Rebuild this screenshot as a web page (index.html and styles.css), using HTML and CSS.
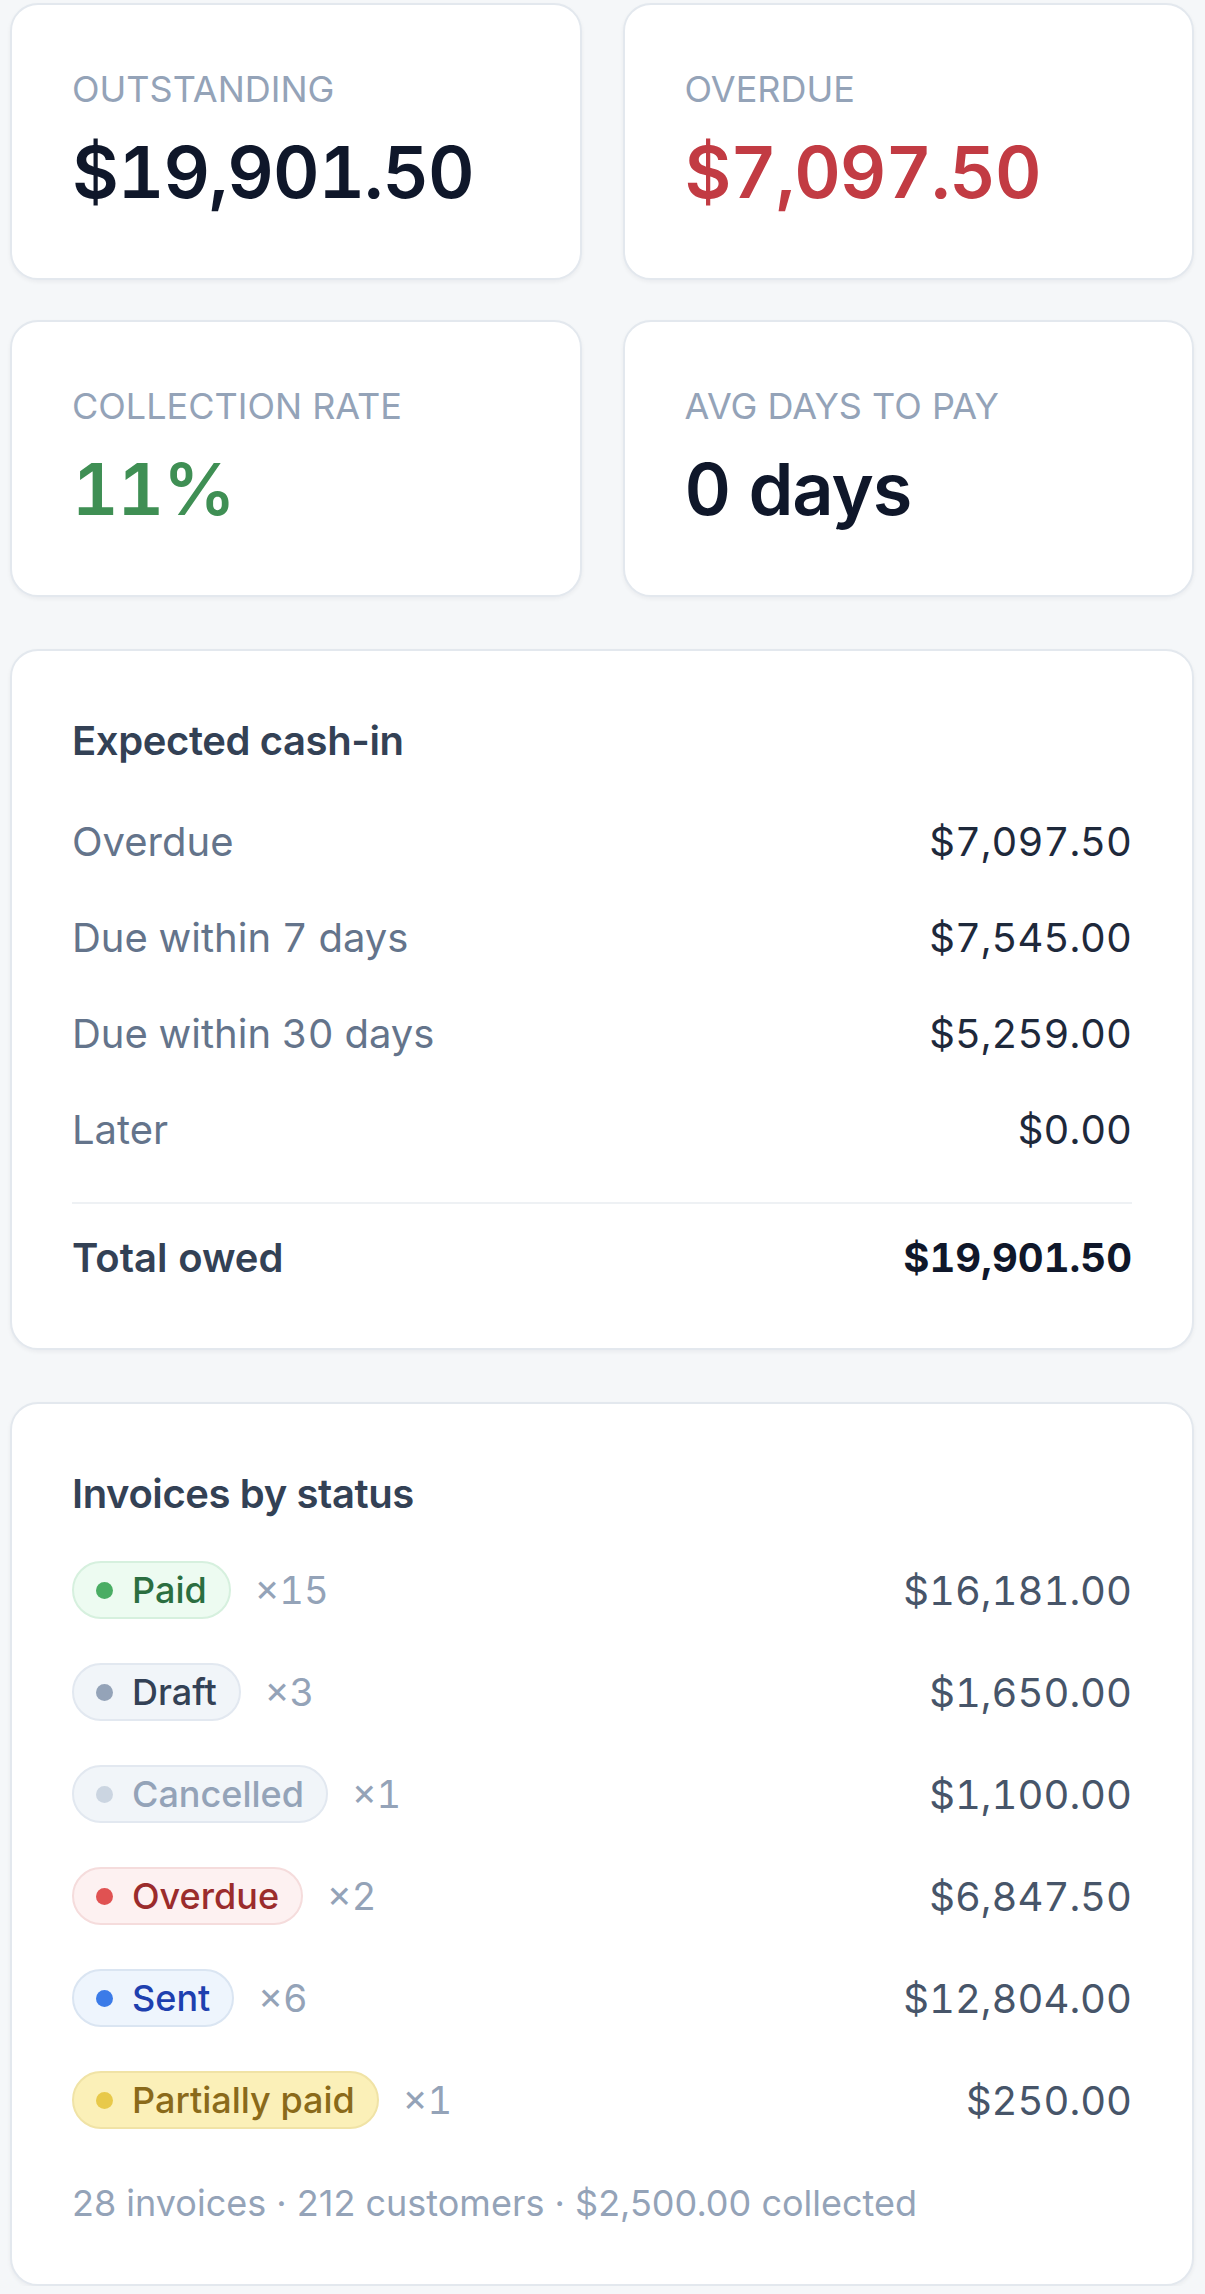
FILE: index.html
```html
<!DOCTYPE html>
<html lang="en">

<head>
    <meta charset="UTF-8">
    <meta name="viewport" content="width=device-width, initial-scale=1.0">
    <title>Receivables</title>
    <link rel="stylesheet" href="styles.css">
</head>

<body>
    <div class="page">
        <div class="stats">
            <div class="card stat">
                <div class="stat-label">Outstanding</div>
                <div class="stat-value">$19,901.50</div>
            </div>
            <div class="card stat">
                <div class="stat-label">Overdue</div>
                <div class="stat-value red">$7,097.50</div>
            </div>
            <div class="card stat">
                <div class="stat-label">Collection rate</div>
                <div class="stat-value green">11%</div>
            </div>
            <div class="card stat">
                <div class="stat-label">Avg days to pay</div>
                <div class="stat-value">0 days</div>
            </div>
        </div>

        <div class="card panel cashin">
            <h2>Expected cash-in</h2>
            <div class="row">
                <span class="row-label">Overdue</span>
                <span class="row-amount">$7,097.50</span>
            </div>
            <div class="row">
                <span class="row-label">Due within 7 days</span>
                <span class="row-amount">$7,545.00</span>
            </div>
            <div class="row">
                <span class="row-label">Due within 30 days</span>
                <span class="row-amount">$5,259.00</span>
            </div>
            <div class="row">
                <span class="row-label">Later</span>
                <span class="row-amount">$0.00</span>
            </div>
            <div class="row total">
                <span class="row-label">Total owed</span>
                <span class="row-amount">$19,901.50</span>
            </div>
        </div>

        <div class="card panel statuses">
            <h2>Invoices by status</h2>
            <div class="status-row">
                <span class="badge paid"><i class="dot"></i>Paid</span>
                <span class="count">×15</span>
                <span class="status-amount">$16,181.00</span>
            </div>
            <div class="status-row">
                <span class="badge draft"><i class="dot"></i>Draft</span>
                <span class="count">×3</span>
                <span class="status-amount">$1,650.00</span>
            </div>
            <div class="status-row">
                <span class="badge cancelled"><i class="dot"></i>Cancelled</span>
                <span class="count">×1</span>
                <span class="status-amount">$1,100.00</span>
            </div>
            <div class="status-row">
                <span class="badge overdue"><i class="dot"></i>Overdue</span>
                <span class="count">×2</span>
                <span class="status-amount">$6,847.50</span>
            </div>
            <div class="status-row">
                <span class="badge sent"><i class="dot"></i>Sent</span>
                <span class="count">×6</span>
                <span class="status-amount">$12,804.00</span>
            </div>
            <div class="status-row">
                <span class="badge partial"><i class="dot"></i>Partially paid</span>
                <span class="count">×1</span>
                <span class="status-amount">$250.00</span>
            </div>
            <p class="summary">28 invoices · 212 customers · $2,500.00 collected</p>
        </div>
    </div>
</body>

</html>
```

FILE: styles.css
```css
:root {
    --bg: #f5f7f9;
    --border: #e3e8ee;
    --muted: #94a3b8;
    --text: #0f172a;
}

body {
    margin: 0;
    background: var(--bg);
    font-family: Inter, "Noto Sans", Arial, sans-serif;
    font-variant-numeric: tabular-nums;
    color: var(--text);
}

.page {
    padding: 3px 11px 0 10px;
}

.card {
    background: #fff;
    border: 2px solid var(--border);
    border-radius: 28px;
    box-shadow: 0 2px 4px rgba(15, 23, 42, 0.05);
}

.stats {
    display: grid;
    grid-template-columns: 1fr 1fr;
    column-gap: 41px;
    row-gap: 40px;
}

.stat {
    padding: 63px 60px 64px;
}

.stat-label {
    font-size: 36px;
    line-height: 43px;
    text-transform: uppercase;
    color: var(--muted);
    font-variant-numeric: normal;
}

.stat-value {
    margin-top: 19px;
    font-size: 72px;
    line-height: 84px;
    font-weight: 600;
    letter-spacing: -1px;
}

.red {
    color: #c23b43;
}

.green {
    color: #3f8f54;
}

.panel {
    margin-top: 52px;
    padding: 60px;
}

.panel h2 {
    margin: 0;
    font-size: 40px;
    line-height: 60px;
    font-weight: 600;
    color: #334155;
    letter-spacing: -0.4px;
    font-variant-numeric: normal;
}

.cashin h2 {
    margin-bottom: 23px;
}

.row {
    display: flex;
    justify-content: space-between;
    padding: 18px 0;
    font-size: 40px;
    line-height: 60px;
}

.row-label {
    color: #64748b;
}

.row-amount {
    color: #1e293b;
}

.row.total {
    margin-top: 24px;
    padding: 24px 0 0;
    border-top: 2px solid #eef1f4;
}

.row.total .row-label {
    color: #334155;
    font-weight: 600;
}

.row.total .row-amount {
    color: var(--text);
    font-weight: 700;
}

.statuses {
    padding-bottom: 56px;
}

.statuses h2 {
    margin-bottom: 15px;
}

.status-row {
    display: flex;
    align-items: center;
    gap: 24px;
    padding: 22px 0;
}

.badge {
    display: inline-flex;
    align-items: center;
    gap: 19px;
    padding: 8px 22px;
    border: 2px solid;
    border-radius: 30px;
    font-size: 36px;
    line-height: 38px;
    font-weight: 500;
}

.dot {
    width: 17px;
    height: 17px;
    border-radius: 50%;
}

.count {
    font-size: 38px;
    color: var(--muted);
}

.status-amount {
    margin-left: auto;
    font-size: 40px;
    color: #475569;
}

.paid {
    background: #edfbf1;
    border-color: #d6f0de;
    color: #2b6e40;
}

.paid .dot {
    background: #4aad64;
}

.draft {
    background: #f1f5f9;
    border-color: #e2e8f0;
    color: #334155;
}

.draft .dot {
    background: #94a3b8;
}

.cancelled {
    background: #f1f5f9;
    border-color: #e2e8f0;
    color: #94a3b8;
}

.cancelled .dot {
    background: #cbd5e1;
}

.overdue {
    background: #fdf1f1;
    border-color: #f5dcdc;
    color: #9b2c2c;
}

.overdue .dot {
    background: #e05252;
}

.sent {
    background: #eef5fd;
    border-color: #dae5f2;
    color: #1e40af;
}

.sent .dot {
    background: #3b7be8;
}

.partial {
    background: #fbf0b8;
    border-color: #f0e3a6;
    color: #8a6a1a;
}

.partial .dot {
    background: #e8c94a;
}

.summary {
    margin: 27px 0 0;
    font-size: 36px;
    line-height: 50px;
    color: var(--muted);
    font-variant-numeric: normal;
}
```
